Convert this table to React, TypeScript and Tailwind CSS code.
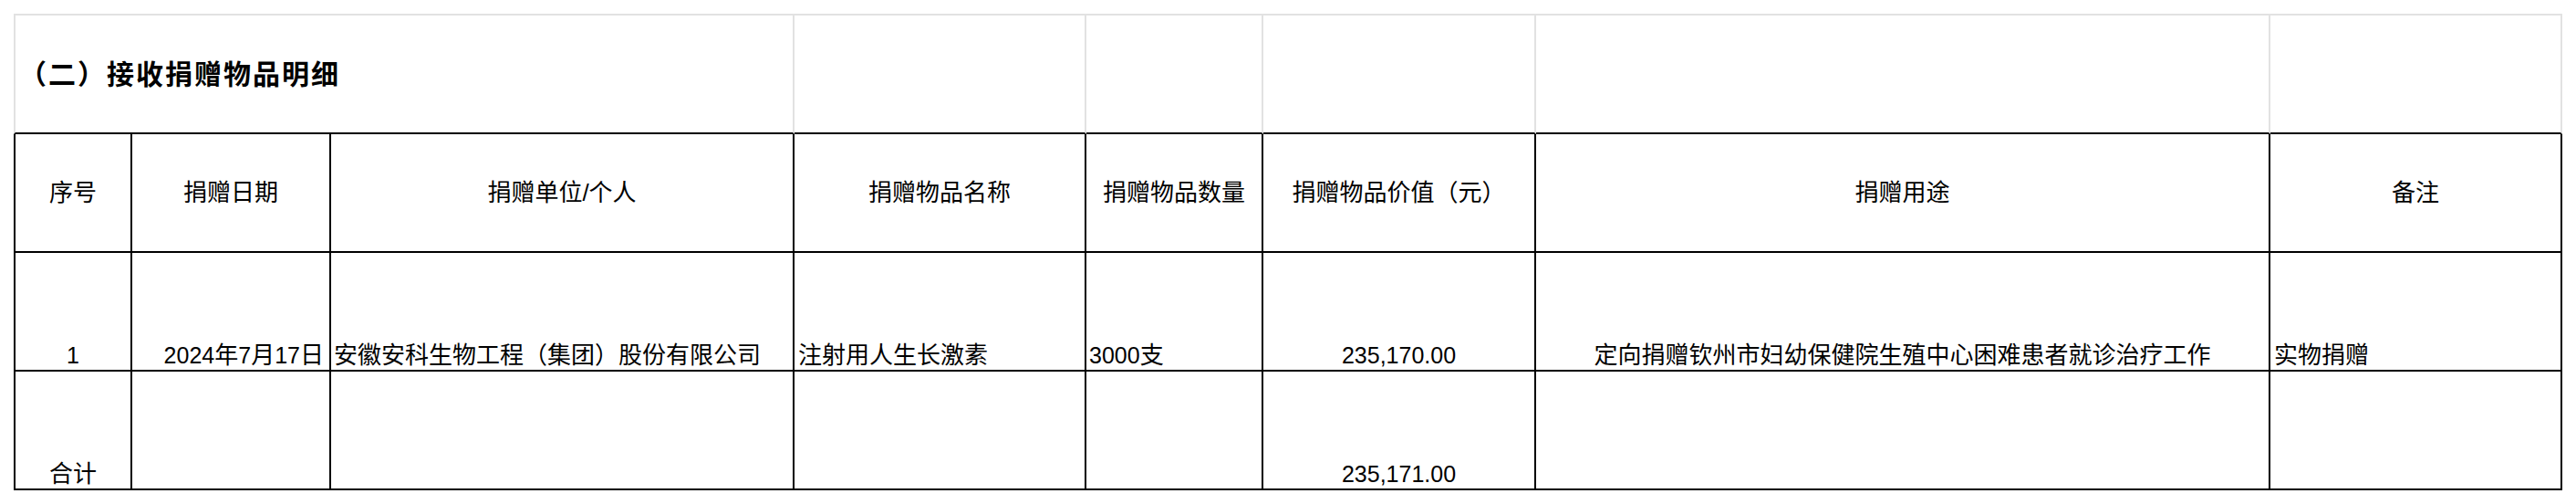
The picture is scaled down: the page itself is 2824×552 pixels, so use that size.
const font = { fontFamily: '"Liberation Sans", "Noto Sans CJK SC", sans-serif' }

const cols = 'grid grid-cols-[130px_218px_508px_320px_194px_299px_805px_320px]'
const cell = 'border-r-2 border-b-2 border-black flex'
const bottomCell = `${cell} items-end pb-[3px] leading-none`

export default function App() {
  return (
    <div className="bg-white w-[2824px] h-[552px] pt-[15px] pl-[15px] text-black text-[26px]" style={font}>
      {/* Title row */}
      <div className={`${cols} h-[132px]`}>
        <div className="col-span-3 border-l-2 border-t-2 border-r-2 border-b-2 border-l-[#e2e2e2] border-t-[#e2e2e2] border-r-[#e2e2e2] border-b-black flex items-center pl-[4px]">
          <span className="font-bold text-[30px] tracking-[2px]">（二）接收捐赠物品明细</span>
        </div>
        {[0, 1, 2, 3, 4].map((i) => (
          <div key={i} className="border-t-2 border-r-2 border-b-2 border-t-[#e2e2e2] border-r-[#e2e2e2] border-b-black"></div>
        ))}
      </div>

      {/* Header row */}
      <div className={`${cols} h-[130px]`}>
        {['序号', '捐赠日期', '捐赠单位/个人', '捐赠物品名称', '捐赠物品数量', '捐赠物品价值（元）', '捐赠用途', '备注'].map((h, i) => (
          <div key={h} className={`${cell} items-center justify-center leading-none ${i === 0 ? 'border-l-2' : ''}`}>
            {h}
          </div>
        ))}
      </div>

      {/* Data row */}
      <div className={`${cols} h-[130px]`}>
        <div className={`${bottomCell} border-l-2 justify-center`}><span className="text-[25px]">1</span></div>
        <div className={`${bottomCell} justify-end pr-[6px]`}>
          <span><span className="text-[25px]">2024</span>年<span className="text-[25px]">7</span>月<span className="text-[25px]">17</span>日</span>
        </div>
        <div className={`${bottomCell} pl-[3px] whitespace-nowrap`}>安徽安科生物工程（集团）股份有限公司</div>
        <div className={`${bottomCell} pl-[4px]`}>注射用人生长激素</div>
        <div className={`${bottomCell} pl-[3px]`}><span><span className="text-[25px]">3000</span>支</span></div>
        <div className={`${bottomCell} justify-center`}><span className="text-[25px]">235,170.00</span></div>
        <div className={`${bottomCell} justify-center whitespace-nowrap`}>定向捐赠钦州市妇幼保健院生殖中心困难患者就诊治疗工作</div>
        <div className={`${bottomCell} pl-[4px]`}>实物捐赠</div>
      </div>

      {/* Total row */}
      <div className={`${cols} h-[130px]`}>
        <div className={`${bottomCell} border-l-2 justify-center`}>合计</div>
        <div className={bottomCell}></div>
        <div className={bottomCell}></div>
        <div className={bottomCell}></div>
        <div className={bottomCell}></div>
        <div className={`${bottomCell} justify-center`}><span className="text-[25px]">235,171.00</span></div>
        <div className={bottomCell}></div>
        <div className={bottomCell}></div>
      </div>
    </div>
  )
}
